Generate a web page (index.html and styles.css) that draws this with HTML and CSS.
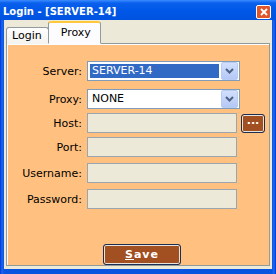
FILE: index.html
```html
<!DOCTYPE html>
<html lang="en">
<head>
  <meta charset="UTF-8">
  <title>Login - [SERVER-14]</title>
  <link rel="stylesheet" href="styles.css">
</head>
<body>

<div class="window">
  <div class="titlebar">
    <span class="title">Login - [SERVER-14]</span>
    <span class="close">
      <svg width="8" height="8" viewBox="0 0 8 8"><path d="M1 1L7 7M7 1L1 7" stroke="#fff" stroke-width="1.8"/></svg>
    </span>
  </div>

  <div class="client">
    <div class="tabs">
      <div class="tab">Login</div>
      <div class="tab active">Proxy</div>
    </div>

    <div class="panel">
      <div class="row row-server">
        <label>Server:</label>
        <div class="select">
          <span class="value selected">SERVER-14</span>
          <span class="drop"><svg width="9" height="6" viewBox="0 0 9 6"><path d="M1 1L4.5 4.5L8 1" fill="none" stroke="#4d6185" stroke-width="2"/></svg></span>
        </div>
      </div>
      <div class="row row-proxy">
        <label>Proxy:</label>
        <div class="select">
          <span class="value">NONE</span>
          <span class="drop"><svg width="9" height="6" viewBox="0 0 9 6"><path d="M1 1L4.5 4.5L8 1" fill="none" stroke="#4d6185" stroke-width="2"/></svg></span>
        </div>
      </div>
      <div class="row row-host">
        <label>Host:</label>
        <div class="field"></div>
        <button class="btn btn-dots">...</button>
      </div>
      <div class="row row-port">
        <label>Port:</label>
        <div class="field"></div>
      </div>
      <div class="row row-user">
        <label>Username:</label>
        <div class="field"></div>
      </div>
      <div class="row row-pass">
        <label>Password:</label>
        <div class="field"></div>
      </div>

      <button class="btn btn-save"><u>S</u>ave</button>
    </div>
  </div>
</div>

</body>
</html>
```

FILE: styles.css
```css
body {
  margin: 0;
  padding: 0;
  font-family: 'DejaVu Sans', sans-serif;
  font-size: 11px;
  background: #fff;
}

.window {
  width: 276px;
  height: 274px;
  display: flex;
  flex-direction: column;
  background: linear-gradient(90deg, #0831d9 0, #166aee 2px, #0a55e0 4px, #0a55e0 272px, #166aee 274px, #0831d9 276px);
}

.titlebar {
  height: 20px;
  display: flex;
  align-items: center;
  justify-content: space-between;
  padding: 0 5px 0 3px;
  background: linear-gradient(#3b8cff 0, #0a60ec 3px, #0058e8 10px, #0053e0 20px);
}

.title {
  color: #fff;
  font-weight: bold;
  font-size: 10px;
  margin-top: 2px;
}

.close {
  width: 13px;
  height: 12px;
  margin-top: 3px;
  display: flex;
  align-items: center;
  justify-content: center;
  background: #e0552c;
  border: 1px solid #fff;
  border-radius: 2px;
}

.client {
  flex: 1;
  margin: 0 4px 5px 4px;
  padding: 2px 2px 3px 2px;
  background: #ece9d8;
  display: flex;
  flex-direction: column;
}

.tabs {
  display: flex;
  align-items: flex-end;
  height: 22px;
  position: relative;
  z-index: 1;
  margin-bottom: -1px;
}

.tab {
  height: 16px;
  padding: 0 6px 0 5px;
  line-height: 16px;
  background: linear-gradient(#fefefe, #f4f3ee);
  border: 1px solid #919b9c;
  border-bottom: none;
  border-radius: 3px 3px 0 0;
  color: #000;
}

.tab.active {
  height: 20px;
  padding: 0 9px 0 12px;
  line-height: 20px;
  margin-left: -1px;
  background: #fcfcfe;
  border-top: 2px solid #ffc83c;
  border-bottom: 1px solid #fcfcfe;
}

.panel {
  flex: 1;
  border: 1px solid #919b9c;
  background: #ffc080;
  box-shadow: inset 1px 1px 0 #fcfcfe;
  padding-top: 17px;
  display: flex;
  flex-direction: column;
}

.row {
  display: flex;
  align-items: center;
  height: 20px;
}

.row label {
  width: 75px;
  text-align: right;
  margin-right: 5px;
  color: #000;
}

.row-proxy { margin-top: 8px; }
.row-host { margin-top: 4px; }
.row-port { margin-top: 4px; }
.row-user { margin-top: 6px; }
.row-pass { margin-top: 6px; }

.select {
  width: 149px;
  height: 18px;
  border: 1px solid #7f9db9;
  background: #fff;
  display: flex;
  align-items: center;
  padding-left: 2px;
}

.value {
  flex: 1;
  height: 14px;
  line-height: 14px;
  padding-left: 2px;
  margin-right: 2px;
}

.value.selected {
  background: #316ac5;
  color: #fff;
}

.drop {
  width: 15px;
  height: 16px;
  margin-right: 1px;
  border: 1px solid #b7cbf3;
  border-radius: 2px;
  background: linear-gradient(#d2e0fd, #b4c8f6);
  display: flex;
  align-items: center;
  justify-content: center;
}

.field {
  width: 148px;
  height: 18px;
  border: 1px solid #9aa5ad;
  background: #ece9d8;
}

.btn {
  font-family: 'DejaVu Sans', sans-serif;
  font-weight: bold;
  color: #fff;
  background: #a24f22;
  border: 1px solid #1c2d4f;
  border-radius: 3px;
  box-shadow: inset 0 0 0 1px #e8e4dc;
  cursor: pointer;
}

.btn-dots {
  width: 24px;
  height: 19px;
  margin-left: 4px;
  padding: 0 0 4px 0;
  font-size: 11px;
  line-height: 10px;
}

.btn-save {
  width: 78px;
  height: 21px;
  padding: 0;
  margin: auto 0 0 96px;
  font-size: 11px;
  letter-spacing: 1px;
}
```
